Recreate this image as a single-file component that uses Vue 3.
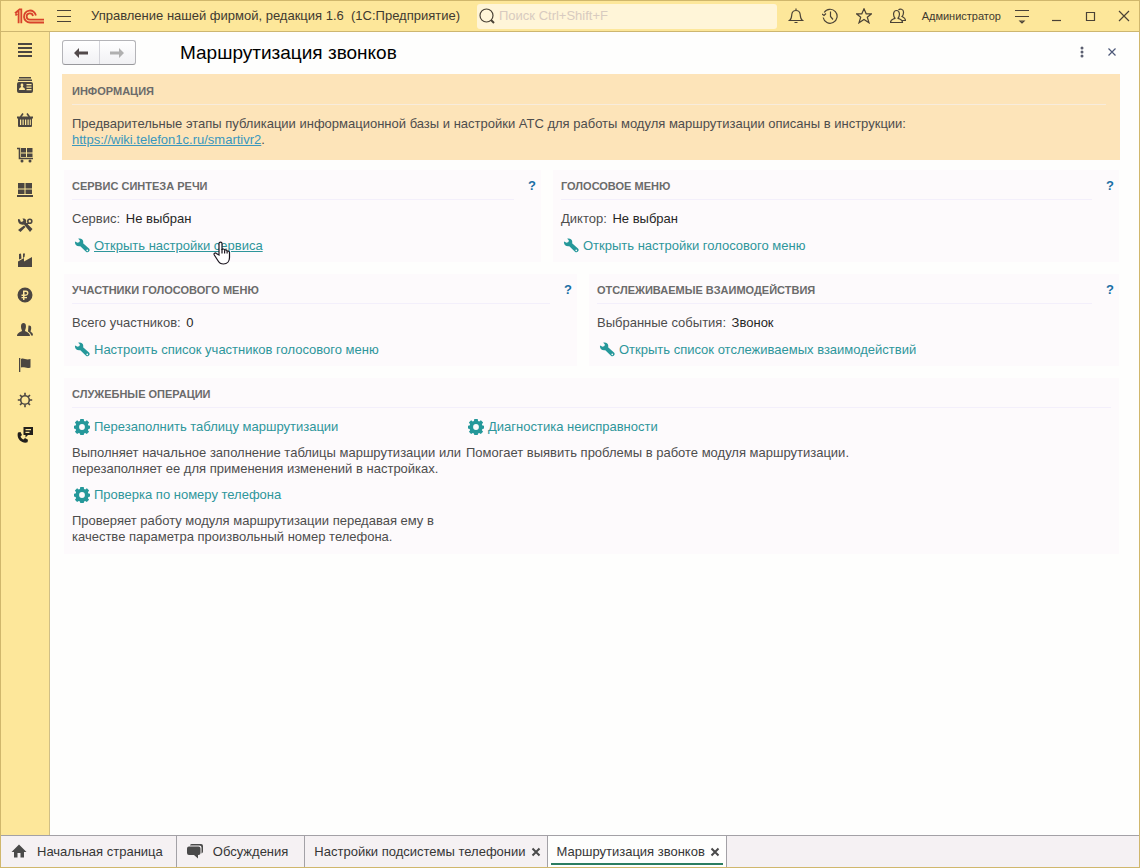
<template>
  <div class="window">
    <header class="titlebar">
      <svg class="logo" viewBox="0 0 30 16" width="30" height="16">
        <path d="M1 5.200L4.600 2.200v13M1.400 7.400L3.200 6M7.300 15.200V1.400H5.300" />
        <path d="M21.900 7.500a6 6 0 1 0-5.900 7H30" />
        <path d="M19 8a3.200 3.200 0 1 0-3 3.700H30" />
      </svg>
      <button class="bar-button main-menu" aria-label="Главное меню">
        <svg viewBox="0 0 16 16" width="16" height="16"><path d="M1 2.500h14M1 8.500h14M1 13.500h14" /></svg>
      </button>
      <span class="app-name">Управление нашей фирмой, редакция 1.6&nbsp; (1С:Предприятие)</span>
      <label class="search">
        <svg viewBox="0 0 18 18" width="18" height="18">
          <circle cx="8.500" cy="8.500" r="6.500" />
          <path d="M13 13l3 3" stroke-width="2" />
        </svg>
        <input type="text" placeholder="Поиск Ctrl+Shift+F" aria-label="Поиск" />
      </label>
      <button v-for="b in tools" :key="b.label" class="bar-button" :aria-label="b.label">
        <svg viewBox="0 0 16 16" width="16" height="16"><path :d="b.path" /></svg>
      </button>
      <span class="user">Администратор</span>
      <button v-for="b in controls" :key="b.label" class="bar-button" :aria-label="b.label">
        <svg viewBox="0 0 16 16" width="16" height="16"><path :d="b.path" /></svg>
      </button>
    </header>

    <div class="body">
      <nav class="sidebar">
        <button v-for="s in sections" :key="s.label" :aria-label="s.label">
          <svg viewBox="0 0 16 16" width="16" height="16" fill-rule="evenodd">
            <path v-if="s.fill" :d="s.fill" />
            <path v-if="s.line" :d="s.line" class="line" />
          </svg>
        </button>
      </nav>

      <main class="page">
        <div class="page-head">
          <div class="history">
            <button aria-label="Назад">
              <svg viewBox="0 0 14 10" width="14" height="10"><path d="M0 5l5-5v3.500h9v3H5V10z" /></svg>
            </button>
            <button aria-label="Вперед" disabled>
              <svg viewBox="0 0 14 10" width="14" height="10"><path d="M14 5L9 0v3.500H0v3h9V10z" /></svg>
            </button>
          </div>
          <h1>Маршрутизация звонков</h1>
          <button class="head-button" aria-label="Еще">
            <svg viewBox="0 0 12 12" width="12" height="12">
              <circle cx="6" cy="2" r="1.500" /><circle cx="6" cy="6" r="1.500" /><circle cx="6" cy="10" r="1.500" />
            </svg>
          </button>
          <button class="head-button" aria-label="Закрыть">
            <svg viewBox="0 0 12 12" width="12" height="12"><path d="M2.500 2.500l7 7M9.500 2.500l-7 7" stroke="#4d5878" stroke-width="1.200" /></svg>
          </button>
        </div>

        <section class="info">
          <h2>Информация</h2>
          <p>
            Предварительные этапы публикации информационной базы и настройки АТС для работы модуля маршрутизации описаны в инструкции:<br />
            <a href="#">https://wiki.telefon1c.ru/smartivr2</a>.
          </p>
        </section>

        <div class="panels">
          <div v-for="(row, i) in rows" :key="i" class="row" :class="'row-' + i">
            <section v-for="p in row" :key="p.title" class="panel">
              <div class="panel-head">
                <h2>{{ p.title }}</h2>
                <button class="help" aria-label="Справка">?</button>
              </div>
              <p class="field">{{ p.name }}: <span>{{ p.value }}</span></p>
              <a href="#" class="command" :class="{ hovered: p.hovered }">
                <svg viewBox="0 0 16 16" width="16" height="16"><path :d="wrench" fill-rule="evenodd" /></svg>
                <span>{{ p.link }}</span>
                <svg v-if="p.hovered" class="pointer" viewBox="0 0 18 24" width="18" height="24">
                  <path d="M6 14V2.500C6 .6 9 .6 9 2.500V9c0-1.500 2.600-1.300 2.600.3v.5c0-1.400 2.500-1.200 2.500.4v.6c0-1.200 2.400-1 2.400.6v5.100c0 3.800-2.300 6.500-6 6.500-3 0-4.400-1.200-5.500-3.200L1.300 14c-.9-1.700.9-2.700 2.100-1.500z" />
                  <path d="M9 8v4.500M11.600 9.500v3M14.100 10.500v2" />
                </svg>
              </a>
            </section>
          </div>

          <section class="panel">
            <h2>Служебные операции</h2>
            <div class="operations">
              <div v-for="o in operations" :key="o.link" class="operation">
                <a href="#" class="command">
                  <svg viewBox="0 0 16 16" width="16" height="16"><path :d="gear" fill-rule="evenodd" /></svg>
                  <span>{{ o.link }}</span>
                </a>
                <p>{{ o.text }}</p>
              </div>
            </div>
          </section>
        </div>
      </main>
    </div>

    <footer class="tabs">
      <button class="tab home">
        <svg viewBox="0 0 16 16" width="16" height="16"><path d="M8 .5L.5 8H3v5.500h3.500V9h3v4.500H13V8h2.500z" /></svg>
        <span>Начальная страница</span>
      </button>
      <button class="tab talks">
        <svg viewBox="0 0 18 18" width="18" height="18">
          <path d="M5.500 1H15q2 0 2 2v5.500q0 1.500-1.500 2V4.500q0-2-2-2H4Q4 1 5.500 1z" />
          <path d="M3 3.500h9.500q2 0 2 2V10q0 2-2 2H12v3.500L8 12H3q-2 0-2-2V5.500q0-2 2-2z" />
        </svg>
        <span>Обсуждения</span>
      </button>
      <div v-for="t in openTabs" :key="t" class="tab closable" :class="{ active: t === current }">
        <button class="tab-name" @click="current = t">{{ t }}</button>
        <button class="tab-close" aria-label="Закрыть вкладку">
          <svg viewBox="0 0 10 10" width="10" height="10"><path d="M1.500 1.500l7 7M8.500 1.500l-7 7" /></svg>
        </button>
      </div>
    </footer>
  </div>
</template>

<script setup>
import { ref } from 'vue'

const tools = [
  { label: 'Уведомления', path: 'M1.500 12.500c2-1.300 2-3 2.300-6C4.100 3.500 5.500 2.500 8 2.500s3.900 1 4.200 4c.3 3 .3 4.700 2.300 6zM8 2.500V.5M6.500 14.500h3' },
  { label: 'История', path: 'M2.200 4.500a7 7 0 1 1-1 5M0 6l2 1.500L4 5.500M8.500 3.500v5l2.500 3' },
  { label: 'Избранное', path: 'M8 .8l2.200 5h5.300l-4.200 3.400 1.700 5.600L8 11.500l-5 3.300 1.700-5.600L.5 5.800h5.300z' },
  { label: 'Пользователь', path: 'M.5 14.500c0-3 2.500-3 4.500-4.300-2-2.200-2.200-7.700 1.500-7.700S10 8 8 10.200c2 1.300 4.500 1.300 4.500 4.300zM8.500 2C9.500.7 13.800.5 13.500 4.500c0 2-.5 3-1.500 4 1.500 1 3.500 1.500 3.500 4h-3.300' }
]

const controls = [
  { label: 'Сервис', path: 'M1 2.500h14M1 8.500h14M6 13h4l-2 2z' },
  { label: 'Свернуть', path: 'M4 12.500h9' },
  { label: 'Развернуть', path: 'M4.500 4.500h8v8h-8z' },
  { label: 'Закрыть', path: 'M4 3l10 10M14 3L4 13' }
]

const sections = [
  { label: 'Главное', fill: 'M1 1h14v2H1zM1 5h14v2H1zM1 9h14v2H1zM1 13h14v2H1z' },
  { label: 'Компания', fill: 'M2 0h12v1.500H2zM1 2.500h14V4H1zM2 5h12q2 0 2 2v7q0 2-2 2H2q-2 0-2-2V7q0-2 2-2zM5 6.500C3.200 6.500 3.500 9 4.300 10 3 10.500 2 11 2 13h6c0-2-1-2.500-2.300-3C6.500 9 6.800 6.500 5 6.500zM9.500 7h5v1.300h-5zM9.500 9.500h5v1.300h-5zM9.500 12h5v1.300h-5z' },
  { label: 'Продажи', fill: 'M0 4.500h16v2h-1V14q0 1-1 1H2q-1 0-1-1V6.500H0zM3 7.500v5.500h1.200V7.500zM5.500 7.500v5.500h1.200V7.500zM8 7.500v5.500h1.200V7.500zM10.500 7.500v5.500h1.200V7.500zM12.800 7.500v5.500h1V7.500z', line: 'M3.500 5l2.500-3.500M12.500 5l-2.500-3.500' },
  { label: 'Закупки', fill: 'M4 1h5v4.500H4zM10 1h5.500v4.500H10zM4 6.500h5V10H4zM10 6.500h5.500V10H10zM5 12.500a1.500 1.500 0 1 1 0 3 1.500 1.500 0 1 1 0-3zM13 12.500a1.500 1.500 0 1 1 0 3 1.500 1.500 0 1 1 0-3z', line: 'M0 1.500h2.500v10H16' },
  { label: 'Склад', fill: 'M1 1h6.500v5.500H1zM8.500 1H15v5.500H8.500zM1 7.500h6.500V12H1zM8.500 7.500H15V12H8.500zM0 13h16v2H0z' },
  { label: 'Работы', fill: 'M1 2l2 .5.5 2L5 5l1.500-1.500L5.500 1.500c3-.5 4.500 1.500 3.500 4L15.500 12l-2.500 3-6-7.500C3.500 8.500.5 6 1 2zM3.500 15L1 13l6-4.500 1.500 1.500z', line: 'M9 8l2.500-2.500M14.800 4.200a2 2 0 1 1-4 0 2 2 0 1 1 4 0' },
  { label: 'Производство', fill: 'M1 15V9.500L7 6v3.500L15 5v10zM2 2l2-.5.5 5L2 7.500zM6 1.500h2L7.500 5 6 6z' },
  { label: 'Деньги', fill: 'M8 .5a7.500 7.500 0 1 1 0 15A7.500 7.500 0 1 1 8 .5zM6 3.500v4H4.500V9H6v1H4.500v1.300H6V13h1.500v-1.700H10V10H7.500V9c5 0 5-5.500 1.500-5.500zM7.500 5H9c1.500 0 1.500 2.500 0 2.500H7.500z' },
  { label: 'Персонал', fill: 'M6.500 1C3.500 1 3.500 5.500 5 8.500c0 1.500-5 1.500-5 5.500h13c0-4-5-4-5-5.500C9.500 5.500 9.500 1 6.500 1zM11.500 3.500c3.500-.5 3 3.500 2 6 1 1 2.500 1 2.500 4h-2c0-2-1.500-3-3-4z' },
  { label: 'Отчеты', fill: 'M2 1h1.300v14H2zM4 2c3-1.500 4.500 1.500 9.500 0v8.500c-4 1.500-6-1-9.500 0z' },
  { label: 'Настройки', line: 'M12.300 8a4.300 4.300 0 1 1-8.600 0 4.300 4.300 0 1 1 8.600 0M8 .8v2.700M8 12.500v2.700M.8 8h2.700M12.500 8h2.700M3 3l1.900 1.900M11.100 11.100L13 13M3 13l1.900-1.900M11.100 4.900L13 3' },
  { label: 'Телефония', fill: 'M6.500 0H16v8h-5L8.500 10.500V8h-2zM8.500 2v1.200h5.500V2zM8.500 4.800V6h4V4.800zM1 5.500l2.500-.5L5 8 3.500 9.500c.5 1.500 1.500 2.300 3 3L8 11l3 1.800-.5 2.500C5 17-1 12 1 5.500z' }
]

const wrench = 'M1 3.400l2.600 1.300 1.900-.6.300-1.900L4.200.7C7.700 0 10 2.400 9.100 5.300l5.900 5.200c2 2-1 5.100-3 3.200L6.300 8.200C3.200 9 .5 6.600 1 3.400zM13.200 11.600a.8.8 0 1 0 .1 1.600.8.800 0 1 0-.1-1.600z'
const gear = 'M6.300 0h3.400l.4 2 1.100.5 1.700-1.200 2.200 2.300-1.200 1.600.5 1.200 1.600.3v2.900l-1.600.4-.5 1.200 1.200 1.600-2.300 2.300-1.600-1.200-1.100.5-.4 1.600H6.300l-.4-1.600-1.200-.5-1.600 1.200L.900 12.800l1.200-1.600L1.600 10 0 9.600V6.700l1.600-.3.500-1.200L.9 3.600l2.200-2.300 1.600 1.200L5.900 2zM8 5.100a2.900 2.900 0 1 0 0 5.800 2.900 2.900 0 1 0 0-5.800z'

const rows = [
  [
    { title: 'Сервис синтеза речи', name: 'Сервис', value: 'Не выбран', link: 'Открыть настройки сервиса', hovered: true },
    { title: 'Голосовое меню', name: 'Диктор', value: 'Не выбран', link: 'Открыть настройки голосового меню' }
  ],
  [
    { title: 'Участники голосового меню', name: 'Всего участников', value: '0', link: 'Настроить список участников голосового меню' },
    { title: 'Отслеживаемые взаимодействия', name: 'Выбранные события', value: 'Звонок', link: 'Открыть список отслеживаемых взаимодействий' }
  ]
]

const operations = [
  { link: 'Перезаполнить таблицу маршрутизации', text: 'Выполняет начальное заполнение таблицы маршрутизации или перезаполняет ее для применения изменений в настройках.' },
  { link: 'Диагностика неисправности', text: 'Помогает выявить проблемы в работе модуля маршрутизации.' },
  { link: 'Проверка по номеру телефона', text: 'Проверяет работу модуля маршрутизации передавая ему в качестве параметра произвольный номер телефона.' }
]

const openTabs = ['Настройки подсистемы телефонии', 'Маршрутизация звонков']
const current = ref('Маршрутизация звонков')
</script>

<style>
body {
  margin: 0;
}
</style>

<style scoped>
* {
  box-sizing: border-box;
}
.window {
  display: flex;
  flex-direction: column;
  min-height: 100vh;
  border: 1px solid #d0b76c;
  background: #fefefd;
  color: #4d4d4d;
  font: 13px/16px "Liberation Sans", Arial, sans-serif;
}
button {
  display: flex;
  align-items: center;
  justify-content: center;
  padding: 0;
  border: 0;
  background: none;
  color: inherit;
  font: inherit;
}
h1, h2, p {
  margin: 0;
}
svg {
  flex: none;
}

.titlebar {
  display: flex;
  align-items: center;
  height: 31px;
  padding-left: 13px;
  border-bottom: 1px solid #cdb670;
  background: #fde79a;
  color: #3f3a30;
}
.logo {
  fill: none;
  stroke: #d8432b;
  stroke-width: 1.800;
}
.bar-button {
  flex: none;
  width: 34px;
  height: 30px;
}
.bar-button:last-child {
  width: 32px;
}
.bar-button svg,
.search svg {
  fill: none;
  stroke: #4a4236;
  stroke-width: 1.200;
}
.main-menu {
  margin-left: 3px;
}
.app-name {
  flex: none;
  min-width: 386px;
  margin-left: 10px;
}
.search {
  display: flex;
  flex: 1;
  align-items: center;
  height: 25px;
  margin-right: 2px;
  padding-left: 1px;
  border-radius: 3px;
  background: #fff5d8;
}
.search input {
  flex: 1;
  min-width: 0;
  padding: 0 3px;
  border: 0;
  outline: 0;
  background: none;
  font: inherit;
}
.search input::placeholder {
  color: #d8cbc0;
}
.user {
  margin: 0 4px 0 7px;
  font-size: 11px;
}

.body {
  display: flex;
  flex: 1;
}
.sidebar {
  flex: none;
  width: 49px;
  border-right: 1px solid #d0bf86;
  background: #fde79a;
}
.sidebar button {
  width: 48px;
  height: 35px;
}
.sidebar svg {
  fill: #4b4641;
}
.sidebar button:last-child svg {
  fill: #221f1c;
}
.sidebar .line {
  fill: none;
  stroke: #4b4641;
  stroke-width: 1.600;
}

.page {
  flex: 1;
  padding: 8px 19px 8px 12px;
}
.page-head {
  display: flex;
  align-items: flex-start;
  height: 25px;
  margin-bottom: 9px;
}
.history {
  display: flex;
  width: 74px;
  height: 25px;
  margin-right: 44px;
  border: 1px solid #b4b4b8;
  border-bottom-color: #98989c;
  border-radius: 3px;
  background: linear-gradient(#fff, #f1f1f4);
}
.history button {
  flex: 1;
}
.history button + button {
  border-left: 1px solid #d4d4da;
}
.history svg {
  fill: #51494a;
}
.history button:disabled svg {
  fill: #b0b0b0;
}
h1 {
  flex: 1;
  color: #000;
  font-size: 19px;
  font-weight: normal;
  line-height: 25px;
}
.head-button {
  width: 30px;
  height: 24px;
}
.head-button:last-child {
  margin-right: -7px;
}
.head-button svg {
  fill: #5b5f70;
}

h2 {
  flex: 1;
  padding-bottom: 5px;
  border-bottom: 1px solid #f3effb;
  color: #6b6b6b;
  font-size: 11px;
  line-height: 16px;
  text-transform: uppercase;
}
.info {
  margin-bottom: 10px;
  padding: 9px 14px 12px 10px;
  background: #fde4b9;
}
.info h2 {
  margin-bottom: 11px;
  border-color: #f8ecdc;
}
.info a {
  color: #3a97bd;
}

.panels {
  display: flex;
  flex-direction: column;
  gap: 12px;
  padding: 0 1px 0 2px;
}
.row {
  display: grid;
  grid-template-columns: 477fr 566fr;
  gap: 12px;
}
.row-1 {
  grid-template-columns: 513fr 530fr;
}
.panel {
  padding: 8px;
  background: #fdfafc;
}
.panel-head {
  display: flex;
  align-items: flex-start;
  gap: 10px;
}
.help {
  width: 16px;
  height: 16px;
  margin-right: -7px;
  color: #1a6fa5;
  font-weight: bold;
}
.field {
  margin: 11px 0;
}
.field span {
  margin-left: 2px;
  color: #262626;
}
.command {
  display: flex;
  position: relative;
  align-items: center;
  width: fit-content;
  gap: 4px;
  padding-left: 2px;
  color: #2e969b;
  text-decoration: none;
}
.command svg {
  fill: #25989a;
}
.hovered span {
  text-decoration: underline;
}
.command .pointer {
  position: absolute;
  top: 3px;
  right: 32px;
  fill: #fff;
  stroke: #1c1720;
  stroke-width: 1.200;
}
.operations {
  display: grid;
  grid-template-columns: repeat(auto-fill, 390px);
  gap: 10px 4px;
  padding: 11px 0 1px;
}
.operation p {
  margin-top: 10px;
}

.tabs {
  display: flex;
  height: 32px;
  border-top: 1px solid #a3a1a6;
  background: #f5f1f3;
  color: #363636;
}
.tab {
  display: flex;
  align-items: center;
  border-right: 1px solid #a3a1a6;
}
.tab svg {
  fill: #4a4a4a;
}
.home {
  gap: 10px;
  padding: 0 13px 0 10px;
}
.talks {
  gap: 9px;
  padding: 0 16px 0 9px;
}
.closable {
  gap: 2px;
  padding: 0 3px 0 1px;
}
.tab-name {
  height: 100%;
  padding-left: 8px;
}
.tab-close {
  width: 16px;
  height: 16px;
}
.tab-close svg {
  stroke: #4a4a4a;
  stroke-width: 2;
}
.active {
  background: linear-gradient(#2b7d60, #2b7d60) center 27px / calc(100% - 6px) 2px no-repeat #fefefd;
}
</style>
